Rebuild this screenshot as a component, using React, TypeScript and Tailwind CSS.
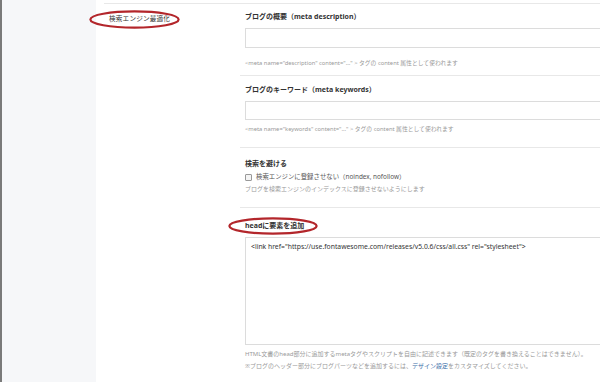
import React from 'react';

const font = { fontFamily: '"Noto Sans", "Noto Sans CJK JP", sans-serif' };

const Ellipse = ({ className }: { className: string }) => (
  <svg className={`absolute pointer-events-none ${className}`} viewBox="0 0 100 20" preserveAspectRatio="none">
    <ellipse cx="50" cy="10" rx="48.5" ry="8.5" fill="none" stroke="#b3262b" strokeWidth="2.2" vectorEffect="non-scaling-stroke" />
  </svg>
);

const App = () => {
  return (
    <div className="w-[600px] h-[382px] overflow-hidden flex bg-white text-[#333]" style={font}>
      <div className="w-[96px] shrink-0 bg-[#f6f7f9] border-l-2 border-[#7a7a7a]" />
      <div className="flex-1 pl-[8px] pt-[3px] min-w-0">
        <div className="relative flex border-t border-b border-[#e8e8e8] w-[600px]">
          <div className="w-[136px] shrink-0 relative">
            <div className="pl-[5px] pt-[10px] text-[6.6px] leading-[10px] tracking-[0.2px]">検索エンジン最適化</div>
            <Ellipse className="left-[-15px] top-[6px] w-[91px] h-[19px]" />
          </div>

          <div className="flex-1">
            {/* meta description */}
            <div className="pl-[5px] pt-[8px] pb-[7px] border-b border-[#e8e8e8]">
              <div className="text-[7px] font-bold leading-[10px]">ブログの概要（meta description）</div>
              <div className="mt-[6px] h-[20px] w-[420px] border border-[#dcdcdc]" />
              <div className="mt-[10px] text-[5.8px] leading-[10px] text-[#999]">
                &lt;meta name="description" content="..." &gt; タグの content 属性として使われます
              </div>
            </div>

            {/* meta keywords */}
            <div className="pl-[5px] pt-[9px] pb-[13px] border-b border-[#e8e8e8]">
              <div className="text-[7px] font-bold leading-[10px]">ブログのキーワード（meta keywords）</div>
              <div className="mt-[6px] h-[19px] w-[420px] border border-[#dcdcdc]" />
              <div className="mt-[4px] text-[5.8px] leading-[10px] text-[#999]">
                &lt;meta name="keywords" content="..." &gt; タグの content 属性として使われます
              </div>
            </div>

            {/* noindex */}
            <div className="pl-[5px] pt-[11px] pb-[13px] border-b border-[#e8e8e8]">
              <div className="text-[7px] font-bold leading-[10px]">検索を避ける</div>
              <div className="mt-[3px] flex items-center gap-[4px] text-[6.4px] leading-[10px] text-[#555]">
                <span className="w-[7px] h-[7px] border border-[#999] bg-[#f4f4f4] rounded-[1px]" />
                <span>検索エンジンに登録させない（noindex, nofollow）</span>
              </div>
              <div className="mt-[2px] text-[6px] leading-[10px] text-[#999]">
                ブログを検索エンジンのインデックスに登録させないようにします
              </div>
            </div>

            {/* head */}
            <div className="pl-[5px] pt-[13px] pb-[11px]">
              <div className="relative">
                <div className="text-[7px] font-bold leading-[10px]">headに要素を追加</div>
                <Ellipse className="left-[-17px] top-[-4px] w-[90px] h-[18px]" />
              </div>
              <textarea
                readOnly
                className="mt-[6px] block w-[420px] h-[108px] border border-[#dcdcdc] px-[5px] py-[3px] text-[6.8px] leading-[11px] text-[#333] resize-none outline-none"
                style={font}
                defaultValue={'<link href="https://use.fontawesome.com/releases/v5.0.6/css/all.css" rel="stylesheet">'}
              />
              <div className="mt-[3px] text-[6px] leading-[12px] text-[#999]">
                <div>HTML文書のhead部分に追加するmetaタグやスクリプトを自由に記述できます（既定のタグを書き換えることはできません）。</div>
                <div>
                  ※ブログのヘッダー部分にブログパーツなどを追加するには、<span className="text-[#3b6ea8]">デザイン設定</span>をカスタマイズしてください。
                </div>
              </div>
            </div>
          </div>
        </div>
      </div>
    </div>
  );
};

export default App;
